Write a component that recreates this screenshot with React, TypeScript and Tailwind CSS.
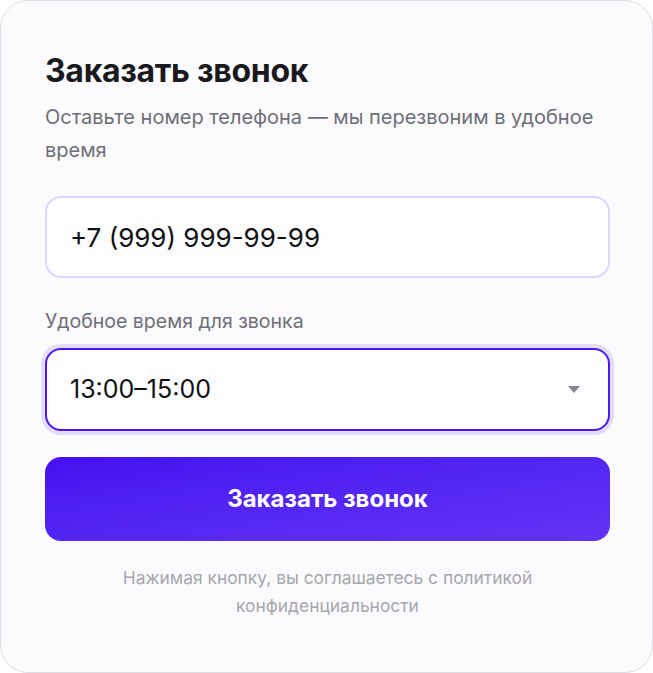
export default function App() {
  return (
    <div className="w-[653px] h-[673px] bg-white" style={{ fontFamily: "Inter, 'Noto Sans', sans-serif" }}>
      {/* Card */}
      <div className="w-full h-full rounded-[28px] border border-[#dcdce2] bg-[#fbfbfd] pl-[44px] pr-[42px] pt-[50px]">
        <h2 className="text-[32px] leading-[40px] font-bold text-[#1a1a1e] tracking-[-0.3px]">Заказать звонок</h2>
        <p className="mt-[10px] text-[20px] leading-[33px] text-[#6e6e76] pr-[6px]">
          Оставьте номер телефона — мы перезвоним в удобное время
        </p>

        {/* Phone */}
        <div className="mt-[29px] h-[82px] rounded-[16px] border-2 border-[#ddd5fb] bg-[#fdfdff] flex items-center px-[23px]">
          <span className="text-[26px] text-[#111114]">+7 (999) 999-99-99</span>
        </div>

        {/* Time */}
        <div className="mt-[31px] text-[19.5px] leading-[24px] text-[#6e6e76]">Удобное время для звонка</div>
        <div className="mt-[15px] h-[83px] rounded-[16px] border-2 border-[#4a18f2] bg-[#fdfdff] shadow-[0_0_0_4px_#e3dcfc] flex items-center justify-between px-[23px]">
          <span className="text-[25px] text-[#111114]">13:00–15:00</span>
          <svg width="12" height="7" viewBox="0 0 12 7" className="mr-[5px]">
            <path d="M0 0 L12 0 L6 7 Z" fill="#86868c" />
          </svg>
        </div>

        {/* Submit */}
        <button className="mt-[26px] w-full h-[84px] rounded-[16px] bg-gradient-to-br from-[#4510f0] to-[#6333f6] text-white text-[24px] font-bold">
          Заказать звонок
        </button>

        <p className="mt-[23px] text-center text-[17.4px] leading-[28px] text-[#a6a6ad] px-[60px]">
          Нажимая кнопку, вы соглашаетесь с политикой конфиденциальности
        </p>
      </div>
    </div>
  );
}
